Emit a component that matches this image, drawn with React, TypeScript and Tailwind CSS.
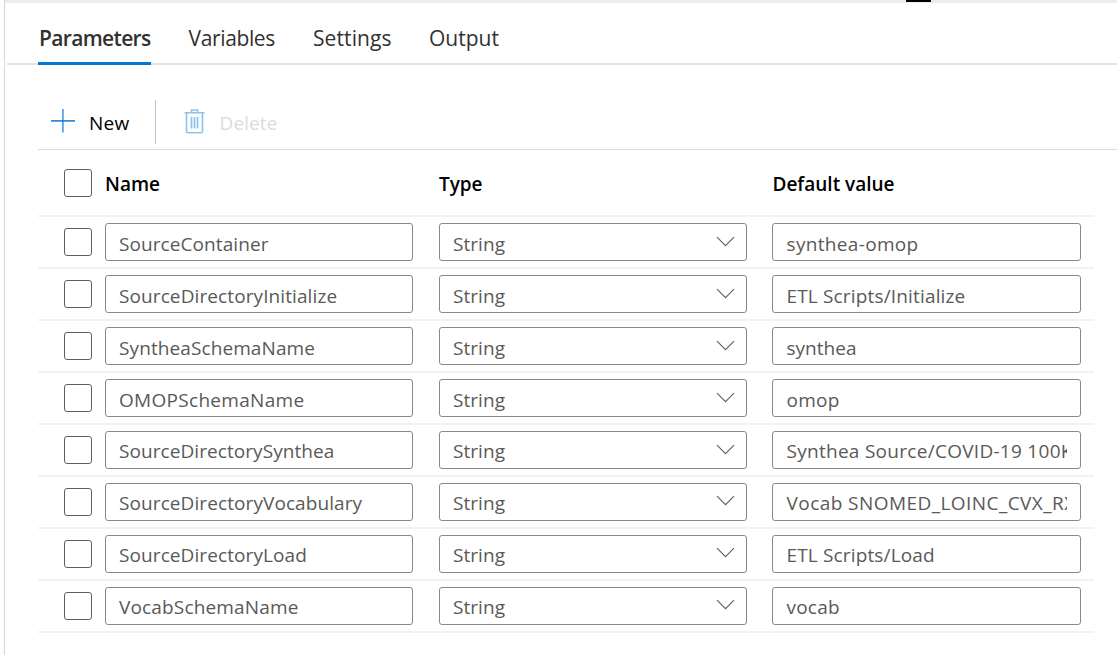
import type { ReactNode } from 'react';

type Row = { name: string; nameClass: string; value: string; valueClass: string; raised?: boolean };

const rows: Row[] = [
  { name: 'SourceContainer', nameClass: 'tracking-[0.08px]', value: 'synthea-omop', valueClass: 'tracking-[0.33px]' },
  { name: 'SourceDirectoryInitialize', nameClass: 'tracking-[0.1px]', value: 'ETL Scripts/Initialize', valueClass: 'tracking-[0.16px]' },
  { name: 'SyntheaSchemaName', nameClass: 'tracking-[0.1px]', value: 'synthea', valueClass: 'tracking-[0.02px]' },
  { name: 'OMOPSchemaName', nameClass: 'tracking-[0.3px]', value: 'omop', valueClass: 'tracking-[0.3px]' },
  { name: 'SourceDirectorySynthea', nameClass: 'tracking-[0.07px]', value: 'Synthea Source/COVID-19 100K', valueClass: 'tracking-[0.28px]', raised: true },
  { name: 'SourceDirectoryVocabulary', nameClass: 'tracking-[0.09px]', value: 'Vocab SNOMED_LOINC_CVX_RXNORM', valueClass: 'tracking-[0.44px]', raised: true },
  { name: 'SourceDirectoryLoad', nameClass: 'tracking-[0.09px]', value: 'ETL Scripts/Load', valueClass: 'tracking-[0.15px]', raised: true },
  { name: 'VocabSchemaName', nameClass: 'tracking-[0.16px]', value: 'vocab', valueClass: 'tracking-[0.22px]', raised: true },
];

function Checkbox() {
  return <span role="checkbox" aria-checked="false" className="block size-7 rounded-[3px] border border-[#605e5c] bg-white" />;
}

function Field({ children, raised, className = '', icon }: { children: ReactNode; raised?: boolean; className?: string; icon?: ReactNode }) {
  return (
    <div className="flex h-[38px] items-start rounded-[3px] border border-[#8a8886] bg-white px-[13px] text-[19px] leading-7 font-[370] text-[#5a5958]">
      <span className={`min-w-0 flex-1 overflow-hidden whitespace-nowrap ${raised ? 'pt-[5px]' : 'pt-1.5'} ${className}`}>{children}</span>
      {icon}
    </div>
  );
}

function Chevron({ raised }: { raised?: boolean }) {
  return (
    <svg className={`-mr-0.5 w-[19px] shrink-0 ${raised ? 'mt-[11px]' : 'mt-3'}`} height="12" viewBox="0 0 19 12" fill="none" stroke="#605e5c" strokeWidth="1.1">
      <path d="M1 1.2 9.5 9.7 18 1.2" />
    </svg>
  );
}

export default function App() {
  return (
    <div className="flex h-[655px] w-[1117px] overflow-hidden bg-white pl-1 font-['Open_Sans','Noto_Sans',sans-serif]">
      <div className="flex min-w-0 flex-1 flex-col border-l border-[#d6d6d6]">
        <div className="flex h-[3px] shrink-0 bg-[#ededed] pl-[901px]">
          <div className="h-0.5 w-[25px] bg-black" />
        </div>
        <nav className="ml-0.5 flex h-[62px] shrink-0 border-b-2 border-[#e3e3e3] pl-[31px] text-[21px] leading-[30px] font-[370] text-[#323130]">
          <div className="mr-[37.500px] h-[62px] w-[113px] border-b-3 border-[#0078d4] pt-5 pl-px font-semibold tracking-[-0.66px]">Parameters</div>
          <div className="w-[124.500px] pt-5 tracking-[-0.36px]">Variables</div>
          <div className="w-[116px] pt-5 tracking-[0.09px]">Settings</div>
          <div className="pt-5 tracking-[0.01px]">Output</div>
        </nav>
        <div className="ml-[33px] flex h-[85px] shrink-0 border-b border-[#dcdcdc] pt-[35px] text-[19px] leading-7">
          <button className="flex h-11 w-[118px] border-r border-[#c8c6c4] pl-[13px] text-black">
            <svg className="mt-[9px]" width="24" height="24" viewBox="0 0 24 24" fill="none">
              <path d="M11.9 0v23.5" stroke="#5a9bea" strokeWidth="1.7" />
              <path d="M0 11.9h24" stroke="#0f78d8" strokeWidth="1.5" />
            </svg>
            <span className="pt-[9px] pl-3.5 font-[370] tracking-[0.3px]">New</span>
          </button>
          <button className="flex h-11 pl-[28px] text-[#dddbd9]">
            <svg className="mt-[8px]" width="22" height="26" viewBox="0 0 22 26" fill="none" stroke="#8cc3ee" strokeWidth="1.6">
              <path d="M.5 4.8h20M7.5 4.3V2h6v2.3M2.500 5.300v17.900q0 1.500 1.500 1.500h13q1.500 0 1.500-1.500V5.300" />
              <path d="M7.500 9v11.500M10.500 9v11.500M13.500 9v11.500" strokeWidth="1.7" />
            </svg>
            <span className="pt-[9px] pl-[13.500px] font-[370] tracking-[0.1px]">Delete</span>
          </button>
        </div>
        <div className="ml-[33px] w-[1056px]">
          <div className="flex h-[67px] border-b-2 border-[#f2f2f2] pt-[19px] pl-[26px] text-[19px] leading-[30px] font-semibold text-black">
            <Checkbox />
            <span className="w-[347px] pl-[13px]">Name</span>
            <span className="w-[333px] tracking-[-0.1px]">Type</span>
            <span className="pl-[0.500px] whitespace-nowrap">Default value</span>
          </div>
          {rows.map((row) => (
            <div key={row.name} className="flex h-[52px] border-b-2 border-[#f2f2f2] pt-1.5 pl-[26px]">
              <div className="mr-[13px] w-7 pt-[5px]"><Checkbox /></div>
              <div className="mr-[26px] w-[308px]"><Field raised={row.raised} className={row.nameClass}>{row.name}</Field></div>
              <div className="mr-[25px] w-[308px]"><Field raised={row.raised} className="tracking-[0.05px]" icon={<Chevron raised={row.raised && row.name !== 'SourceDirectorySynthea'} />}>String</Field></div>
              <div className="w-[309px]"><Field raised={row.raised} className={`pl-[0.5px] ${row.valueClass}`}>{row.value}</Field></div>
            </div>
          ))}
        </div>
      </div>
    </div>
  );
}
